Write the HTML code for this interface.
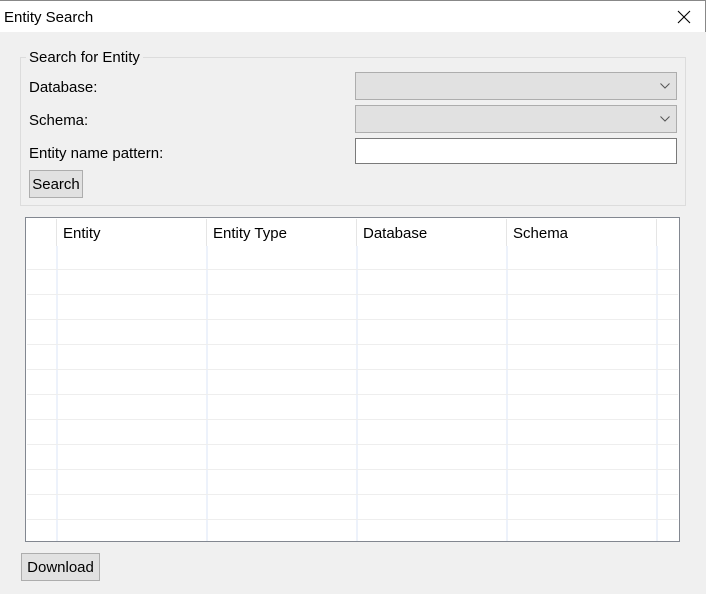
<!DOCTYPE html>
<html><head><style>
*{box-sizing:border-box;margin:0;padding:0}
body{width:706px;height:594px;background:#f0f0f0;font-family:"Liberation Sans",sans-serif;font-size:15px;color:#000;position:relative;overflow:hidden}
.a{position:absolute}
.title{left:0;top:0;width:706px;height:32px;background:#fff;border-top:1px solid #888;border-right:1px solid #888}
.combo{background:#e1e1e1;border:1px solid #adadad}
.btn{background:#e1e1e1;border:1px solid #adadad;text-align:center;line-height:28px}
.hl{height:1px;background:#eeeeee;left:1px;width:651px}
.vl{width:2px;background:#edf2fb;top:28px;bottom:0}
.hs{width:1px;background:#e5e5e5;top:1px;height:27px}
.h{top:7px}
</style></head><body>
<div class="a title"><span class="a" style="left:4px;top:8px">Entity Search</span>
<svg class="a" style="left:677px;top:9px" width="14" height="14"><path d="M1 1L13 13M13 1L1 13" stroke="#000" stroke-width="1.1"/></svg></div>
<div class="a" style="left:20px;top:57px;width:666px;height:149px;border:1px solid #dcdcdc"></div>
<span class="a" style="left:26px;top:49px;background:#f0f0f0;padding:0 3px">Search for Entity</span>
<span class="a" style="left:29px;top:79px">Database:</span>
<span class="a" style="left:29px;top:112px">Schema:</span>
<span class="a" style="left:29px;top:145px">Entity name pattern:</span>
<div class="a combo" style="left:355px;top:72px;width:322px;height:28px"><svg class="a" style="right:6px;top:10px" width="10" height="6"><path d="M0.5 0.5L5 5L9.5 0.5" stroke="#555" fill="none"/></svg></div>
<div class="a combo" style="left:355px;top:105px;width:322px;height:28px"><svg class="a" style="right:6px;top:10px" width="10" height="6"><path d="M0.5 0.5L5 5L9.5 0.5" stroke="#555" fill="none"/></svg></div>
<div class="a" style="left:355px;top:138px;width:322px;height:26px;background:#fff;border:1px solid #7a7a7a"></div>
<div class="a btn" style="left:29px;top:170px;width:54px;height:28px">Search</div>
<div class="a" style="left:25px;top:217px;width:655px;height:325px;background:#fff;border:1px solid #828790">
<div class="a hs" style="left:30px"></div><div class="a hs" style="left:180px"></div><div class="a hs" style="left:330px"></div><div class="a hs" style="left:480px"></div><div class="a hs" style="left:630px"></div>
<div class="a vl" style="left:30px"></div><div class="a vl" style="left:180px"></div><div class="a vl" style="left:330px"></div><div class="a vl" style="left:480px"></div><div class="a vl" style="left:630px"></div>
<span class="a h" style="left:37px">Entity</span><span class="a h" style="left:187px">Entity Type</span><span class="a h" style="left:337px">Database</span><span class="a h" style="left:487px">Schema</span>
<div class="a hl" style="top:51px"></div><div class="a hl" style="top:76px"></div><div class="a hl" style="top:101px"></div><div class="a hl" style="top:126px"></div><div class="a hl" style="top:151px"></div><div class="a hl" style="top:176px"></div><div class="a hl" style="top:201px"></div><div class="a hl" style="top:226px"></div><div class="a hl" style="top:251px"></div><div class="a hl" style="top:276px"></div><div class="a hl" style="top:301px"></div>
</div>
<div class="a btn" style="left:21px;top:553px;width:79px;height:28px">Download</div>
</body></html>
